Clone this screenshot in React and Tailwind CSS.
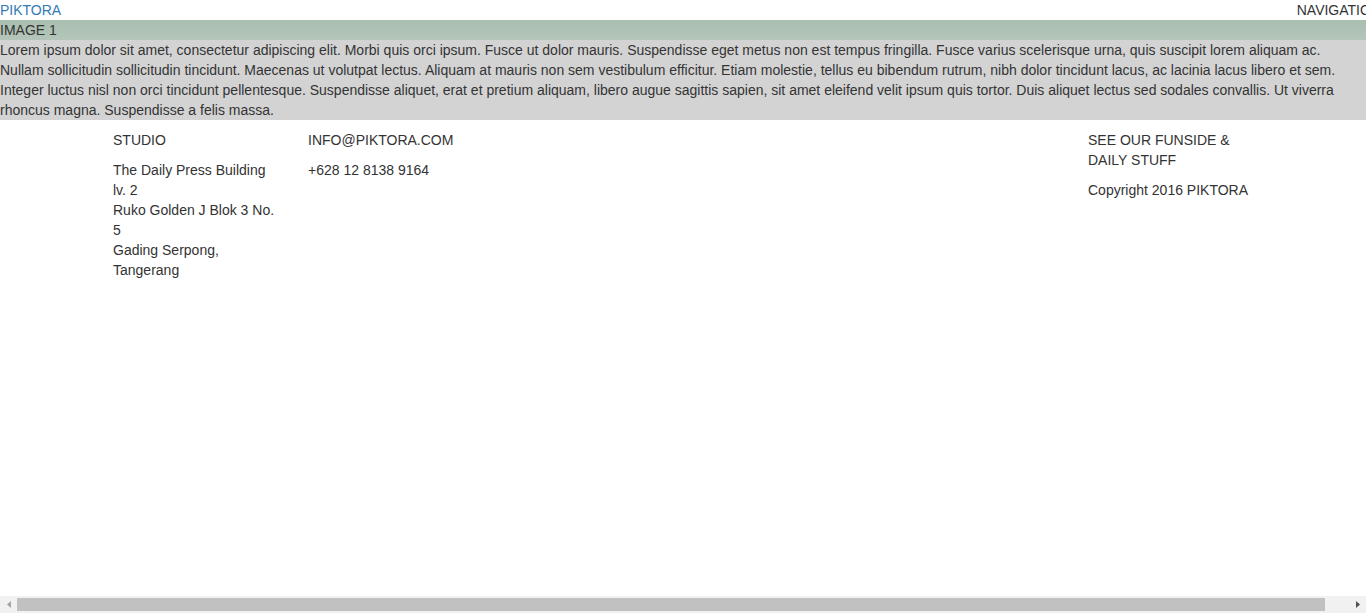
import React from 'react';

const Scrollbar = () => (
  <div className="fixed bottom-0 left-0 w-[1366px] h-[17px] bg-[#f1f1f1] flex items-center">
    <div className="w-[17px] h-[17px] flex items-center justify-center">
      <svg width="4" height="7" viewBox="0 0 4 7"><path d="M4 0 L0 3.5 L4 7 Z" fill="#a3a3a3" /></svg>
    </div>
    <div className="flex-1 h-[13px] flex">
      <div className="w-[1308px] h-full bg-[#c1c1c1]" />
    </div>
    <div className="w-[17px] h-[17px] flex items-center justify-center">
      <svg width="4" height="7" viewBox="0 0 4 7"><path d="M0 0 L4 3.5 L0 7 Z" fill="#505050" /></svg>
    </div>
  </div>
);

const App = () => {
  return (
    <div className="w-[1391px] bg-white text-[#333] text-[14px] leading-[20px] font-['Liberation_Sans',Arial,sans-serif]">
      <header className="flex justify-between pr-[10px]">
        <a href="#" className="text-[#337ab7]">PIKTORA</a>
        <span>NAVIGATION</span>
      </header>

      <div className="w-[1366px]">
        <div className="bg-gradient-to-b from-[#a9bfb0] to-[#b3c6b9]">IMAGE 1</div>
        <p className="bg-[#d3d3d3]">
          Lorem ipsum dolor sit amet, consectetur adipiscing elit. Morbi quis orci ipsum. Fusce ut dolor mauris. Suspendisse eget metus non est tempus fringilla. Fusce varius scelerisque urna, quis suscipit lorem aliquam ac. Nullam sollicitudin sollicitudin tincidunt. Maecenas ut volutpat lectus. Aliquam at mauris non sem vestibulum efficitur. Etiam molestie, tellus eu bibendum rutrum, nibh dolor tincidunt lacus, ac lacinia lacus libero et sem. Integer luctus nisl non orci tincidunt pellentesque. Suspendisse aliquet, erat et pretium aliquam, libero augue sagittis sapien, sit amet eleifend velit ipsum quis tortor. Duis aliquet lectus sed sodales convallis. Ut viverra rhoncus magna. Suspendisse a felis massa.
        </p>
      </div>

      <footer className="flex pt-[10px] pl-[113px] h-[476px]">
        <div className="w-[165px] mr-[30px] flex flex-col gap-[10px]">
          <p>STUDIO</p>
          <p>The Daily Press Building lv. 2<br />Ruko Golden J Blok 3 No. 5<br />Gading Serpong, Tangerang</p>
        </div>
        <div className="w-[165px] flex flex-col gap-[10px]">
          <p>INFO@PIKTORA.COM</p>
          <p>+628 12 8138 9164</p>
        </div>
        <div className="w-[165px] ml-[615px] flex flex-col gap-[10px]">
          <p>SEE OUR FUNSIDE &amp; DAILY STUFF</p>
          <p>Copyright 2016 PIKTORA</p>
        </div>
      </footer>

      <Scrollbar />
    </div>
  );
};

export default App;
